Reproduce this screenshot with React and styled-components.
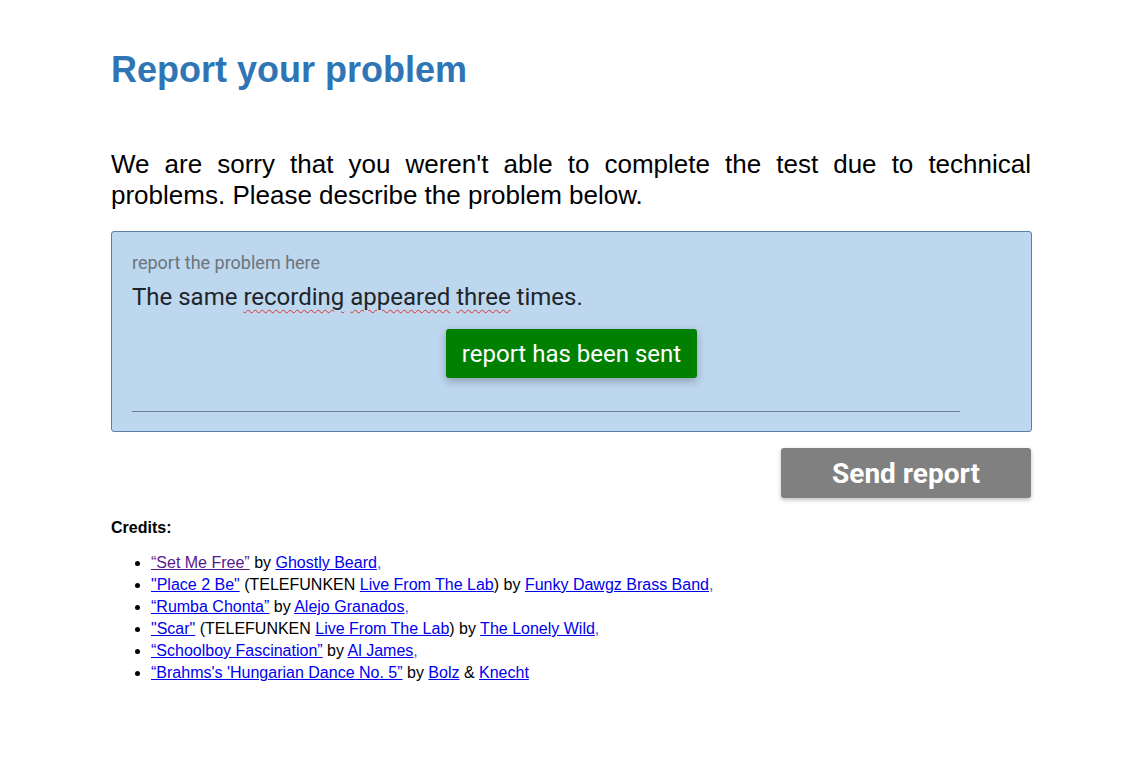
import React from 'react';
import styled, { createGlobalStyle } from 'styled-components';

const GlobalStyle = createGlobalStyle`
  body {
    margin: 0;
    background: #ffffff;
    font-family: "Liberation Sans", Arial, sans-serif;
    color: #000;
  }
`;

const Page = styled.div`
  width: 921px;
  padding: 49px 0 60px 111px;
`;

const Title = styled.h1`
  margin: 0;
  font-size: 36px;
  line-height: 41px;
  font-weight: 700;
  color: #2f75b5;
`;

const Intro = styled.p`
  width: 920px;
  margin: 59px 0 0;
  font-size: 26px;
  line-height: 31px;
  text-align: justify;
`;

const ReportBox = styled.div`
  margin-top: 20px;
  background: #bdd7ee;
  border: 1px solid #5b7ea3;
  border-radius: 3px;
  padding: 20px 20px 19px;
  font-family: Roboto, "Noto Sans", sans-serif;
`;

const Label = styled.div`
  font-size: 18px;
  line-height: 21px;
  color: #6c757d;
`;

const Entry = styled.div`
  margin-top: 10px;
  font-size: 24px;
  line-height: 28px;
  color: #212529;
`;

const Misspelt = styled.span`
  text-decoration: underline wavy #e0302a;
  text-decoration-thickness: 1px;
  text-underline-offset: 4px;
`;

const CenterRow = styled.div`
  display: flex;
  justify-content: center;
  margin-top: 18px;
`;

const Notice = styled.div`
  height: 49px;
  padding: 0 16px;
  display: flex;
  align-items: center;
  background: #008000;
  color: #fff;
  font-size: 24px;
  border-radius: 3px;
  box-shadow: 0 3px 8px rgba(0, 0, 0, 0.28);
`;

const Rule = styled.div`
  width: 828px;
  margin-top: 33px;
  border-bottom: 1px solid #6b7f96;
`;

const Actions = styled.div`
  display: flex;
  justify-content: flex-end;
  margin-top: 16px;
  padding-right: 1px;
`;

const SendButton = styled.button`
  width: 250px;
  height: 50px;
  border: none;
  border-radius: 3px;
  background: #808080;
  color: #fff;
  font-family: Roboto, "Noto Sans", sans-serif;
  font-weight: 700;
  font-size: 28px;
  box-shadow: 0 2px 4px rgba(0, 0, 0, 0.25);
  cursor: pointer;
`;

const CreditsHead = styled.div`
  margin-top: 21px;
  font-size: 16px;
  line-height: 18px;
  font-weight: 700;
`;

const CreditList = styled.ul`
  margin: 15px 0 0;
  padding-left: 40px;
  font-size: 16px;
  line-height: 22px;
`;

const A = styled.a`
  color: ${(p) => (p.$visited ? '#551a8b' : '#0000ee')};
  text-decoration: underline;
`;

const Comma = styled.span`
  color: #5a5ad0;
`;

const credits = [
  {
    title: '“Set Me Free”',
    visited: true,
    rest: [' by ', { link: 'Ghostly Beard' }, { comma: true }],
  },
  {
    title: '"Place 2 Be"',
    rest: [' (TELEFUNKEN ', { link: 'Live From The Lab' }, ') by ', { link: 'Funky Dawgz Brass Band' }, { comma: true }],
  },
  {
    title: '“Rumba Chonta”',
    rest: [' by ', { link: 'Alejo Granados' }, { comma: true }],
  },
  {
    title: '"Scar"',
    rest: [' (TELEFUNKEN ', { link: 'Live From The Lab' }, ') by ', { link: 'The Lonely Wild' }, { comma: true }],
  },
  {
    title: '“Schoolboy Fascination”',
    rest: [' by ', { link: 'Al James' }, { comma: true }],
  },
  {
    title: "“Brahms's 'Hungarian Dance No. 5”",
    rest: [' by ', { link: 'Bolz' }, ' & ', { link: 'Knecht' }],
  },
];

export default function App() {
  return (
    <Page>
      <GlobalStyle />
      <Title>Report your problem</Title>
      <Intro>
        We are sorry that you weren't able to complete the test due to technical problems. Please
        describe the problem below.
      </Intro>
      <ReportBox>
        <Label>report the problem here</Label>
        <Entry>
          The same <Misspelt>recording</Misspelt> <Misspelt>appeared</Misspelt>{' '}
          <Misspelt>three</Misspelt> times.
        </Entry>
        <CenterRow>
          <Notice>report has been sent</Notice>
        </CenterRow>
        <Rule />
      </ReportBox>
      <Actions>
        <SendButton>Send report</SendButton>
      </Actions>
      <CreditsHead>Credits:</CreditsHead>
      <CreditList>
        {credits.map((c, i) => (
          <li key={i}>
            <A href="#" $visited={c.visited}>
              {c.title}
            </A>
            {c.rest.map((part, j) => {
              if (typeof part === 'string') return <React.Fragment key={j}>{part}</React.Fragment>;
              if (part.comma) return <Comma key={j}>,</Comma>;
              return (
                <A key={j} href="#">
                  {part.link}
                </A>
              );
            })}
          </li>
        ))}
      </CreditList>
    </Page>
  );
}
